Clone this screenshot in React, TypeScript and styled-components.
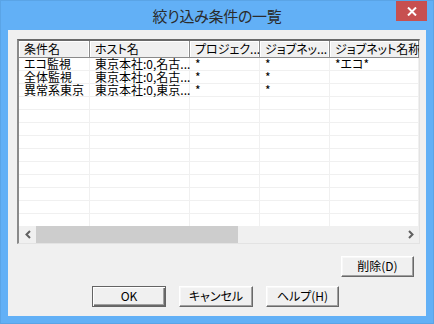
import * as React from 'react'
import styled, { createGlobalStyle } from 'styled-components'

const GlobalStyle = createGlobalStyle`
  html, body {
    margin: 0;
    padding: 0;
    background: #ffffff;
  }
  * {
    box-sizing: border-box;
  }
`

const uiFont = `"Noto Sans CJK JP", "Liberation Sans", sans-serif`

const Window = styled.div`
  width: 434px;
  height: 324px;
  background: #62b0f6;
  border: 1px solid #5aa4e6;
  display: flex;
  flex-direction: column;
  padding: 0 7px 7px 7px;
  font-family: ${uiFont};
  font-feature-settings: "palt";
`

const TitleBar = styled.div`
  height: 29px;
  display: grid;
  grid-template-columns: 1fr auto 1fr;
  align-items: start;
`

const Title = styled.div`
  grid-column: 2;
  padding-top: 5px;
  font-size: 15px;
  line-height: 20px;
  color: #2b2b2b;
  letter-spacing: -0.3px;
`

const CloseButton = styled.div`
  grid-column: 3;
  justify-self: end;
  width: 31px;
  height: 20px;
  margin-right: -1px;
  background: #c75050;
  display: flex;
  align-items: center;
  justify-content: center;
`

const Client = styled.div`
  flex: 1;
  background: #f0f0f0;
  display: flex;
  flex-direction: column;
  padding: 9px 6px 0 9px;
`

const ListView = styled.div`
  height: 205px;
  background: #ffffff;
  border-style: solid;
  border-width: 2px 1px 1px 2px;
  border-color: #696969 #e3e3e3 #e3e3e3 #8a8a8a;
  display: flex;
  flex-direction: column;
  overflow: hidden;
`

const Grid = styled.div`
  flex: 1;
  overflow: hidden;
  display: grid;
  grid-template-columns: 71px 100px 70px 70px 89px;
  grid-auto-rows: 13px;
  grid-template-rows: 17px;
  align-content: start;
`

const HeadCell = styled.div`
  height: 17px;
  background: #f0f0f0;
  border-right: 1px solid #8a8a8a;
  border-bottom: 1px solid #8a8a8a;
  box-shadow: inset 1px 1px #ffffff, inset -1px 0 #ffffff;
  padding: 0 0 0 5px;
  font-size: 12px;
  line-height: 16px;
  color: #000;
  white-space: nowrap;
`

const Cell = styled.div`
  border-right: 1px solid #f0f0f0;
  border-bottom: 1px solid #f0f0f0;
  padding: 0 0 0 5px;
  font-size: 12px;
  line-height: 12px;
  color: #000;
  white-space: nowrap;
`

const ScrollBar = styled.div`
  height: 17px;
  flex-shrink: 0;
  background: #f0f0f0;
  display: flex;
  align-items: stretch;
`

const Arrow = styled.div`
  width: 17px;
  display: flex;
  align-items: center;
  justify-content: center;
`

const Track = styled.div`
  flex: 1;
  display: flex;
`

const Thumb = styled.div<{ $width: number }>`
  width: ${p => p.$width}px;
  background: #cdcdcd;
`

const DeleteRow = styled.div`
  display: flex;
  justify-content: flex-end;
  padding-right: 6px;
  margin-top: 12px;
`

const ButtonRow = styled.div`
  display: flex;
  margin-top: 9px;
  padding-left: 75px;
  gap: 13px;
`

const Button = styled.div<{ $default?: boolean; $width?: number }>`
  width: ${p => p.$width || 74}px;
  height: 21px;
  background: #f0f0f0;
  border: 1px solid;
  border-color: ${p => (p.$default ? '#646464' : '#ffffff #696969 #696969 #ffffff')};
  box-shadow: ${p =>
    p.$default
      ? 'inset 1px 1px #ffffff, inset -1px -1px #696969, inset -2px -2px #a0a0a0'
      : 'inset -1px -1px #a0a0a0, inset 1px 1px #f8f8f8'};
  font-size: 12px;
  line-height: 18px;
  color: #000;
  text-align: center;
  white-space: nowrap;
`

const headers = ['条件名', 'ホスト名', 'プロジェク...', 'ジョブネッ...', 'ジョブネット名称']

const rows = [
  ['エコ監視', '東京本社:0,名古...', '*', '*', '*エコ*'],
  ['全体監視', '東京本社:0,名古...', '*', '*', ''],
  ['異常系東京', '東京本社:0,東京...', '*', '*', ''],
]

const emptyRows = 10

const Chevron = ({ dir }: { dir: 'left' | 'right' }) => (
  <svg width="8" height="9" viewBox="0 0 8 9">
    <polyline
      points={dir === 'left' ? '6,1 2.5,4.5 6,8' : '2,1 5.5,4.5 2,8'}
      fill="none"
      stroke="#606060"
      strokeWidth="2"
    />
  </svg>
)

export default function App() {
  const allRows = [...rows]
  for (let i = 0; i < emptyRows; i++) allRows.push(['', '', '', '', ''])

  return (
    <>
      <GlobalStyle />
      <Window>
        <TitleBar>
          <Title>絞り込み条件の一覧</Title>
          <CloseButton>
            <svg width="10" height="9" viewBox="0 0 10 9">
              <path d="M1 0.5 L9 8.5 M9 0.5 L1 8.5" stroke="#ffffff" strokeWidth="2" />
            </svg>
          </CloseButton>
        </TitleBar>
        <Client>
          <ListView>
            <Grid>
              {headers.map(h => (
                <HeadCell key={h}>{h}</HeadCell>
              ))}
              {allRows.map((r, i) =>
                r.map((c, j) => <Cell key={i + '-' + j}>{c}</Cell>)
              )}
            </Grid>
            <ScrollBar>
              <Arrow><Chevron dir="left" /></Arrow>
              <Track>
                <Thumb $width={202} />
              </Track>
              <Arrow><Chevron dir="right" /></Arrow>
            </ScrollBar>
          </ListView>
          <DeleteRow>
            <Button $width={73}>削除(D)</Button>
          </DeleteRow>
          <ButtonRow>
            <Button $default>OK</Button>
            <Button>キャンセル</Button>
            <Button $width={73}>ヘルプ(H)</Button>
          </ButtonRow>
        </Client>
      </Window>
    </>
  )
}
